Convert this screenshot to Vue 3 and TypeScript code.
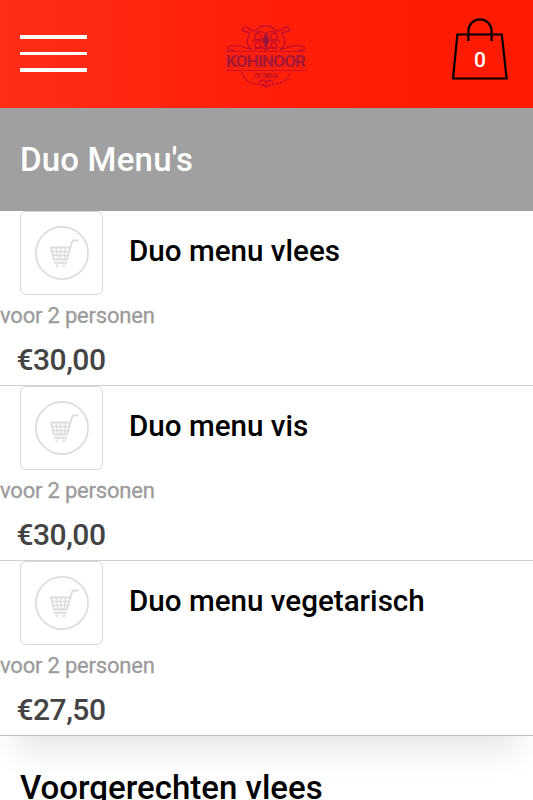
<script setup lang="ts">
import { ref } from 'vue'

interface Product {
  id: number
  name: string
  description: string
  price: string
}

const cartCount = ref(0)

const products: Product[] = [
  { id: 1, name: 'Duo menu vlees', description: 'voor 2 personen', price: '€30,00' },
  { id: 2, name: 'Duo menu vis', description: 'voor 2 personen', price: '€30,00' },
  { id: 3, name: 'Duo menu vegetarisch', description: 'voor 2 personen', price: '€27,50' },
]
</script>

<template>
  <div class="page">
    <header class="topbar">
      <button class="menu-toggle" aria-label="Menu">
        <span></span>
        <span></span>
        <span></span>
      </button>

      <svg class="logo" width="86" height="66" viewBox="-2 0 86 66">
        <g fill="none" stroke="#c8102a" stroke-width="1.6">
          <!-- crest -->
          <path d="M25 7c-1-4-7-4-8 0 2 3 6 1 8 3 0 3-3 4-3 8 0 5 3 7 5 9M57 7c1-4 7-4 8 0-2 3-6 1-8 3 0 3 3 4 3 8 0 5-3 7-5 9" />
          <path d="M25 7c3 1 7 1 9-2 3-3 11-3 14 0 2 3 6 3 9 2" />
          <path d="M30 12c2-5 8-4 11-1 3-3 9-4 11 1M27 19c4-4 8-3 10 0M55 19c-4-4-8-3-10 0M30 27c2-4 7-3 11 0 4-3 9-4 11 0" />
          <circle cx="33" cy="14" r="3.5" />
          <circle cx="49" cy="14" r="3.5" />
          <circle cx="33" cy="22.500" r="3" />
          <circle cx="49" cy="22.500" r="3" />
          <path d="M41 11l3 6-3 8-3-8z" fill="#97173e" stroke="#a51738" />
          <path d="M9 27c-5 1-8-1-6-3 3-3 8-1 12-1 5 0 7 4 12 3M73 27c5 1 8-1 6-3-3-3-8-1-12-1-5 0-7 4-12 3" />
          <path d="M1 28.500h80M1 47.500h80" stroke-width="1.2" />
          <!-- lower ornament -->
          <path d="M17 49c1 7 7 11 15 12l9 2 9-2c8-1 14-5 15-12" stroke-dasharray="3 1" />
          <path d="M34 60c2-4 5-4 7 0 2-4 5-4 7 0M37 61l4 3 4-3" />
        </g>
        <text class="logo-name" x="1" y="44" textLength="80">KOHINOOR</text>
        <text class="logo-sub" x="29" y="55" textLength="24" lengthAdjust="spacingAndGlyphs">OF INDIA</text>
      </svg>

      <button class="cart" aria-label="Winkelwagen">
        <svg width="58" height="64" viewBox="0 0 58 64" fill="none" stroke="#000">
          <path d="M6.4 17.5h44.4l4.8 44H2z" stroke-width="2.2" />
          <path d="M17.4 24V14a11.6 11.6 0 0 1 23.2 0v10" stroke-width="2.2" />
        </svg>
        <span class="cart-count">{{ cartCount }}</span>
      </button>
    </header>

    <section class="category">
      <h2 class="category-title active">Duo Menu's</h2>
      <ul class="products">
        <li v-for="product in products" :key="product.id" class="product">
          <div class="product-head">
            <div class="thumb">
              <svg width="56" height="56" viewBox="0 0 56 56" fill="none" stroke="#dcdcdc">
                <circle cx="28" cy="28" r="26.1" stroke-width="1.7" />
                <path d="M44.5 15.5h-5L38 17l-5 17.5H20l-3-12h19" stroke-width="1.8" />
                <path d="M18 26.5h17M19 30.5h15M22 23l2 11M26.5 23l.5 11M31.5 23l-1 11" stroke-width="1.3" />
                <path d="M20 37.8h13" stroke-width="1.8" />
                <circle cx="23" cy="40.8" r="1.1" />
                <circle cx="30" cy="40.8" r="1.1" />
              </svg>
            </div>
            <h3 class="product-name">{{ product.name }}</h3>
          </div>
          <p class="description">{{ product.description }}</p>
          <p class="price">{{ product.price }}</p>
        </li>
      </ul>
    </section>

    <section class="category">
      <h2 class="category-title">Voorgerechten vlees</h2>
    </section>
  </div>
</template>

<style>
body {
  margin: 0;
  background: #fff;
  overflow: hidden;
}
</style>

<style scoped>
.page {
  height: 800px;
  overflow: hidden;
  font-family: Roboto, 'Liberation Sans', sans-serif;
  color: #000;
}

.topbar {
  display: flex;
  align-items: flex-start;
  justify-content: space-between;
  box-sizing: border-box;
  height: 108px;
  padding: 0 24px 0 20px;
  background: linear-gradient(90deg, #ff2e17 0%, #ff200b 45%, #ff1a00 100%);
}

.menu-toggle {
  display: flex;
  flex-direction: column;
  gap: 13px;
  width: 67px;
  margin: 35px 0 0;
  padding: 0;
  border: none;
  background: none;
}

.menu-toggle span {
  height: 3.7px;
  background: #fff;
}

.logo {
  margin: 23px 7px 0 0;
  overflow: visible;
}

.logo-name {
  font-size: 17px;
  font-weight: 700;
  fill: #a51738;
}

.logo-sub {
  font-size: 7px;
  font-weight: 700;
  fill: #b81129;
}

.cart {
  position: relative;
  width: 58px;
  height: 64px;
  margin: 17px 0 0;
  padding: 0;
  border: none;
  background: none;
}

.cart svg {
  display: block;
}

.cart-count {
  position: absolute;
  top: 30px;
  left: 0;
  width: 58px;
  font-family: Roboto, 'Liberation Sans', sans-serif;
  font-size: 21px;
  font-weight: 500;
  line-height: 26px;
  text-align: center;
  color: #fff;
}

.category-title {
  height: 103px;
  margin: 0;
  padding-left: 20px;
  font-size: 33px;
  font-weight: 500;
  line-height: 103px;
}

.category-title.active {
  background: #a0a0a0;
  color: #fff;
  letter-spacing: 0.2px;
}

.products {
  margin: 0;
  padding: 0;
  list-style: none;
  box-shadow: 0 30px 30px -15px rgba(0, 0, 0, 0.1);
}

.product {
  box-sizing: border-box;
  height: 175px;
  border-bottom: 1px solid #d0d0d0;
  background: #fff;
}

.product:last-child {
  border-bottom-color: #c0c0c0;
}

.product-head {
  display: flex;
  gap: 26px;
  padding-left: 20px;
}

.thumb {
  display: flex;
  align-items: center;
  justify-content: center;
  box-sizing: border-box;
  width: 83px;
  height: 84px;
  border: 1px solid #d8d8d8;
  border-radius: 6px;
}

.product-name {
  margin: 0;
  font-size: 29.6px;
  font-weight: 500;
  line-height: 80px;
}

.description {
  margin: 8px 0 0;
  font-size: 22px;
  line-height: 26px;
  letter-spacing: -0.2px;
  color: #9b9b9b;
  -webkit-text-stroke: 0.3px #9b9b9b;
}

.price {
  margin: 13px 0 0;
  padding-left: 16.5px;
  font-size: 30px;
  font-weight: 500;
  line-height: 36px;
  letter-spacing: -0.5px;
  color: #444;
}
</style>
